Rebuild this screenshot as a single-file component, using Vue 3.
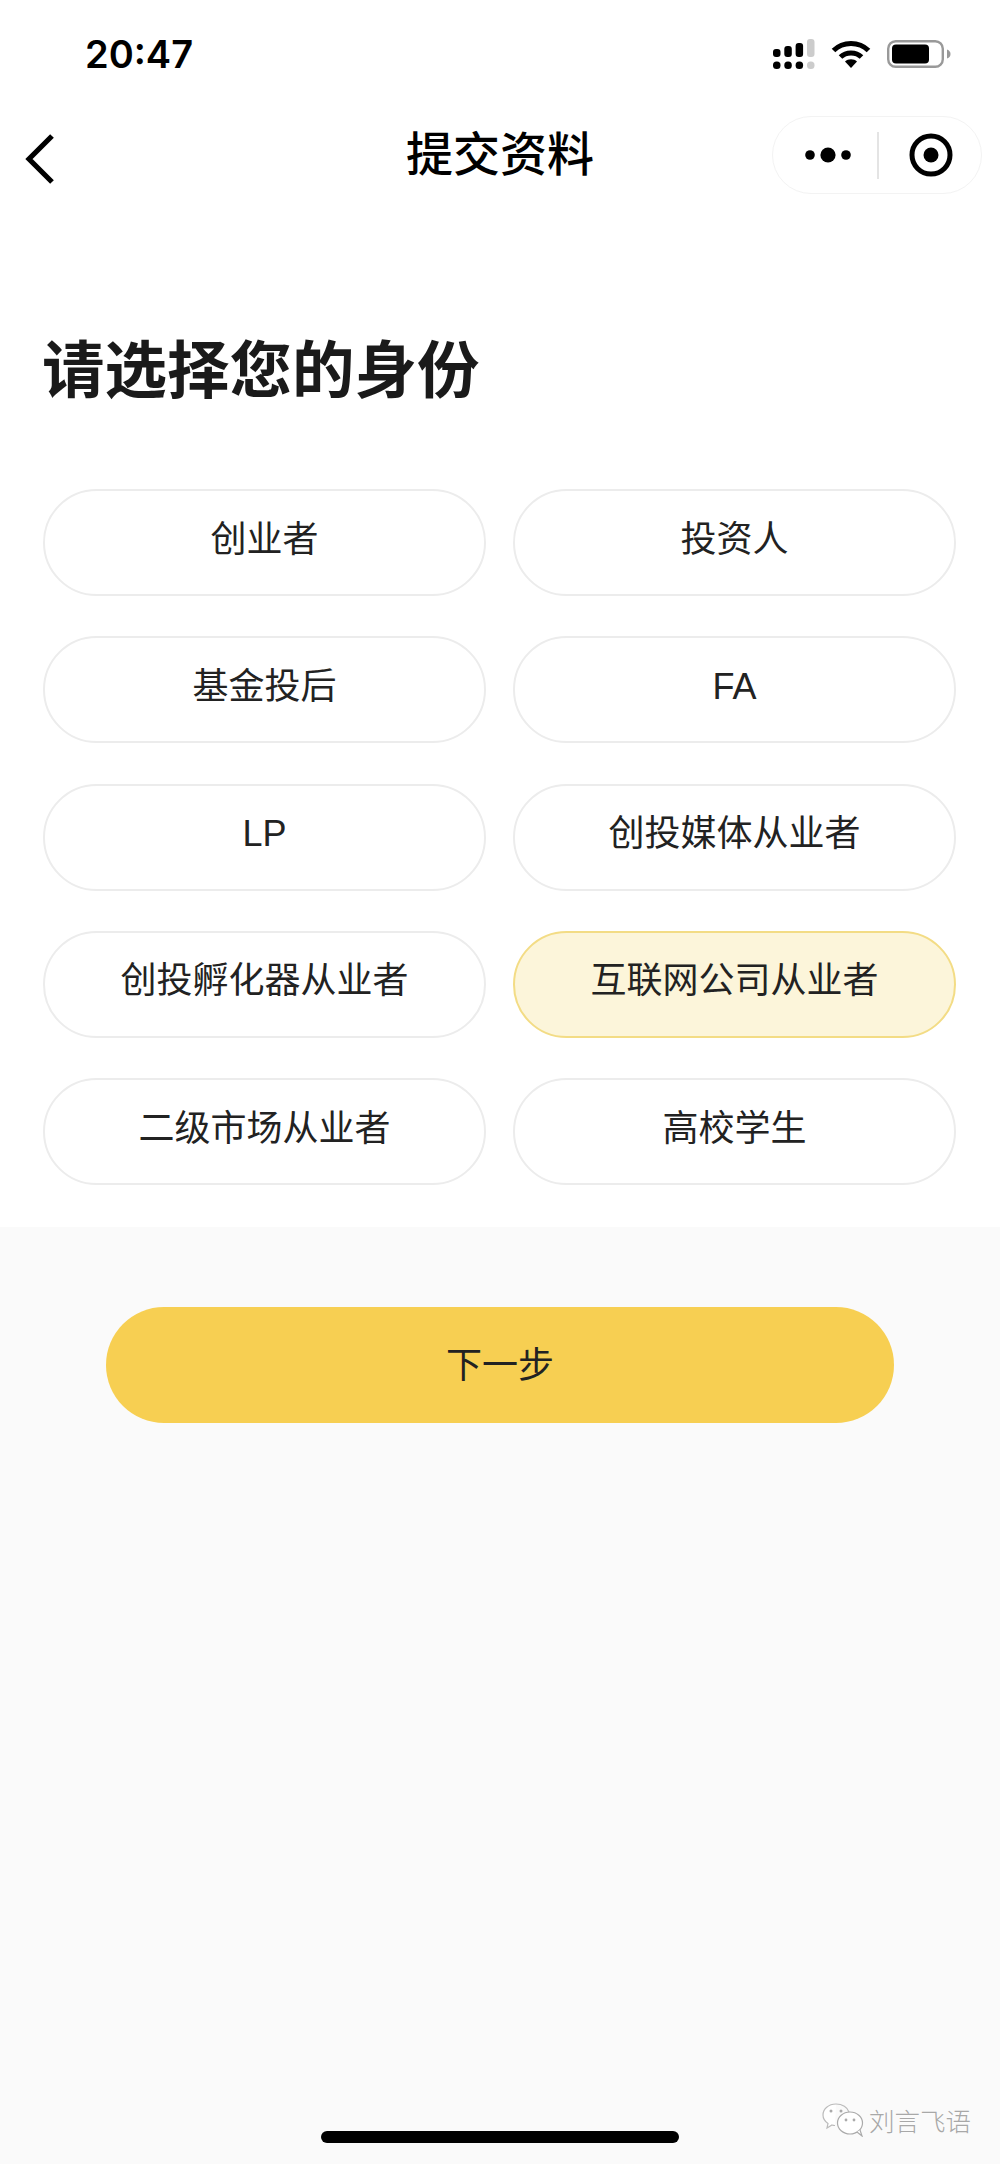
<template>
  <div class="page">
    <div class="top">
      <!-- status bar -->
      <div class="status-bar">
        <span class="time">20:47</span>
        <div class="status-icons">
          <svg class="signal" width="42" height="30" viewBox="0 0 42 30">
            <rect x="0" y="10" width="7.5" height="8" rx="3" fill="#000" />
            <rect x="11.3" y="7" width="7.5" height="11" rx="3" fill="#000" />
            <rect x="22.6" y="4" width="7.5" height="14" rx="3" fill="#000" />
            <rect x="34" y="0" width="7.5" height="18" rx="3" fill="#ccc" />
            <rect x="0" y="22.5" width="7.5" height="7.5" rx="3.5" fill="#000" />
            <rect x="11.3" y="22.5" width="7.5" height="7.5" rx="3.5" fill="#000" />
            <rect x="22.6" y="22.5" width="7.5" height="7.5" rx="3.5" fill="#000" />
            <rect x="34" y="22.5" width="7.5" height="7.5" rx="3.5" fill="#ccc" />
          </svg>
          <svg class="wifi" width="40" height="28" viewBox="0 0 40 28">
            <path d="M2.5 10.5 C12 1 28 1 37.5 10.5" fill="none" stroke="#000" stroke-width="5" />
            <path d="M9.5 17 C15 11.5 25 11.5 30.5 17" fill="none" stroke="#000" stroke-width="5" />
            <path d="M14 21.5 C17 18.5 23 18.5 26 21.5 L20 28 Z" fill="#000" />
          </svg>
          <svg class="battery" width="64" height="28" viewBox="0 0 64 28">
            <rect x="1.2" y="1.2" width="54.6" height="25.6" rx="7.5" fill="#fff" stroke="#999" stroke-width="2.4" />
            <rect x="5" y="4.5" width="37" height="19" rx="4" fill="#000" />
            <path d="M60 9.5 C62.5 10.5 63.5 12 63.5 14 C63.5 16 62.5 17.5 60 18.5 Z" fill="#999" />
          </svg>
        </div>
      </div>

      <!-- nav bar -->
      <div class="nav-bar">
        <svg class="back" width="30" height="50" viewBox="0 0 30 50">
          <path d="M27 2 L4 25 L27 48" fill="none" stroke="#000" stroke-width="5.2" />
        </svg>
        <div class="nav-title">提交资料</div>
        <div class="capsule">
          <svg width="46" height="18" viewBox="0 0 46 18">
            <circle cx="5" cy="9" r="4.8" fill="#000" />
            <circle cx="23" cy="9" r="7.6" fill="#000" />
            <circle cx="41" cy="9" r="4.8" fill="#000" />
          </svg>
          <div class="capsule-line"></div>
          <svg width="44" height="44" viewBox="0 0 44 44">
            <circle cx="22" cy="22" r="19" fill="none" stroke="#000" stroke-width="5" />
            <circle cx="22" cy="22" r="7.5" fill="#000" />
          </svg>
        </div>
      </div>

      <h1 class="heading">请选择您的身份</h1>

      <div class="roles">
        <button
          v-for="role in roles"
          :key="role"
          class="role"
          :class="{ active: role === selected }"
          @click="selected = role"
        >
          {{ role }}
        </button>
      </div>
    </div>

    <div class="bottom">
      <button class="next">下一步</button>
    </div>

    <div class="watermark">
      <svg width="42" height="34" viewBox="0 0 42 34">
        <path d="M14 1 C6.5 1 1 6 1 12 C1 15.5 3 18.5 6 20.5 L5 25 L10 22 C11 22.3 12 22.5 13 22.5" fill="#fff" stroke="#bbb" stroke-width="1.2" />
        <path d="M14 1 C20.5 1 25.5 4.5 27 9" fill="none" stroke="#bbb" stroke-width="1.2" />
        <ellipse cx="28" cy="20" rx="12.5" ry="11" fill="#fff" stroke="#aaa" stroke-width="1.2" />
        <path d="M35 29 L40 33 L38 27" fill="#fff" stroke="#aaa" stroke-width="1.2" />
        <circle cx="9" cy="8" r="1.5" fill="#aaa" />
        <circle cx="19" cy="8" r="1.5" fill="#aaa" />
        <circle cx="24" cy="17" r="1.4" fill="#aaa" />
        <circle cx="32" cy="17" r="1.4" fill="#aaa" />
      </svg>
      <span>刘言飞语</span>
    </div>
    <div class="home-bar"></div>
  </div>
</template>

<script setup>
import { ref } from 'vue'

const roles = [
  '创业者',
  '投资人',
  '基金投后',
  'FA',
  'LP',
  '创投媒体从业者',
  '创投孵化器从业者',
  '互联网公司从业者',
  '二级市场从业者',
  '高校学生'
]
const selected = ref('互联网公司从业者')
</script>

<style>
body {
  background: #fafafa;
}
</style>

<style scoped>
.page {
  position: relative;
  width: 1000px;
  height: 2164px;
  overflow: hidden;
  display: flex;
  flex-direction: column;
  background: #fafafa;
  color: #1a1a1a;
  font-family: "Liberation Sans", "Noto Sans CJK SC", sans-serif;
}

.top {
  height: 1227px;
  background: #fff;
}

.status-bar {
  height: 108px;
  padding: 0 49px 0 85px;
  display: flex;
  align-items: center;
  justify-content: space-between;
}

.time {
  font-family: Inter, sans-serif;
  font-size: 38px;
  font-weight: 600;
  color: #000;
}

.status-icons {
  display: flex;
  align-items: center;
  gap: 16px;
}

.nav-bar {
  height: 94px;
  padding: 0 18px 0 25px;
  display: flex;
  align-items: center;
  justify-content: space-between;
  position: relative;
}

.back {
  margin-top: 8px;
}

.nav-title {
  position: absolute;
  left: 0;
  right: 0;
  padding-bottom: 10px;
  text-align: center;
  font-family: "Noto Sans CJK SC", sans-serif;
  font-size: 47px;
  font-weight: 500;
  color: #000;
}

.capsule {
  width: 210px;
  height: 78px;
  box-sizing: border-box;
  border: 1.5px solid #f3f3f3;
  border-radius: 39px;
  display: flex;
  align-items: center;
  padding-left: 32px;
}

.capsule-line {
  width: 1.5px;
  height: 47px;
  margin: 0 30px 0 26px;
  background: #e4e4e4;
}

.heading {
  margin: 0;
  padding: 126px 0 0 42px;
  font-family: "Noto Sans CJK SC", sans-serif;
  font-size: 62.5px;
  line-height: 76px;
  font-weight: 700;
  color: #1a1a1a;
}

.roles {
  margin-top: 85px;
  padding: 0 43px;
  display: grid;
  grid-template-columns: 443px 443px;
  grid-auto-rows: 107px;
  column-gap: 27px;
  row-gap: 40.25px;
}

.role {
  background: #fff;
  border: 2px solid #ececec;
  border-radius: 54px;
  padding: 0 0 6px;
  font-family: "Liberation Sans", "Noto Sans CJK SC", sans-serif;
  font-size: 36px;
  line-height: 44px;
  color: #222;
  cursor: pointer;
}

.role.active {
  background: #fcf5da;
  border-color: #f3dc85;
}

.bottom {
  flex: 1;
  padding-top: 80px;
  display: flex;
  flex-direction: column;
  align-items: center;
}

.next {
  width: 788px;
  height: 116px;
  border: none;
  border-radius: 58px;
  padding: 0 0 6px;
  background: #f7cf52;
  font-family: "Noto Sans CJK SC", sans-serif;
  font-size: 36px;
  color: #222;
  cursor: pointer;
}

.watermark {
  position: absolute;
  left: 822px;
  top: 2101px;
  display: flex;
  align-items: center;
  gap: 5px;
  font-family: "Noto Sans CJK SC", sans-serif;
  font-size: 25.5px;
  font-weight: 300;
  color: #a8a8a8;
  text-shadow: 0 0 2px #fff;
}

.home-bar {
  position: absolute;
  left: 321px;
  top: 2131px;
  width: 358px;
  height: 12px;
  border-radius: 6px;
  background: #000;
}
</style>
